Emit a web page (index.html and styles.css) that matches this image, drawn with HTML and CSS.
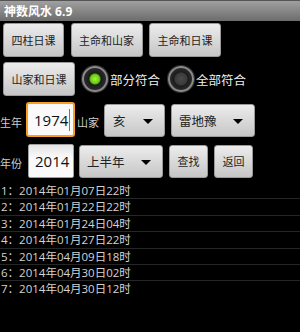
FILE: index.html
```html
<!DOCTYPE html>
<html lang="zh">

<head>
    <meta charset="UTF-8" />
    <meta name="viewport" content="width=device-width, initial-scale=1.0" />
    <title>神数风水 6.9</title>
    <link rel="stylesheet" href="styles.css">
</head>

<body>

    <header class="titlebar">神数风水 6.9</header>

    <nav class="row row-tabs">
        <button class="btn">四柱日课</button>
        <button class="btn">主命和山家</button>
        <button class="btn">主命和日课</button>
    </nav>

    <div class="row row-mode">
        <button class="btn">山家和日课</button>
        <label class="radio">
            <span class="radio-dot checked"></span>
            <span class="radio-text">部分符合</span>
        </label>
        <label class="radio">
            <span class="radio-dot"></span>
            <span class="radio-text">全部符合</span>
        </label>
    </div>

    <div class="row row-birth">
        <span class="field-label">生年</span>
        <div class="edit focused">1974<span class="caret"></span></div>
        <span class="field-label label-shan">山家</span>
        <div class="spinner spinner-small">亥<span class="arrow"></span></div>
        <div class="spinner spinner-wide">雷地豫<span class="arrow"></span></div>
    </div>

    <div class="row row-year">
        <span class="field-label">年份</span>
        <div class="edit">2014</div>
        <div class="spinner spinner-wide">上半年<span class="arrow"></span></div>
        <button class="btn btn-small">查找</button>
        <button class="btn btn-small">返回</button>
    </div>

    <ul class="results">
        <li>1：2014年01月07日22时</li>
        <li>2：2014年01月22日22时</li>
        <li>3：2014年01月24日04时</li>
        <li>4：2014年01月27日22时</li>
        <li>5：2014年04月09日18时</li>
        <li>6：2014年04月30日02时</li>
        <li>7：2014年04月30日12时</li>
    </ul>

</body>

</html>
```

FILE: styles.css
```css
* {
    box-sizing: border-box;
    margin: 0;
    padding: 0;
}

body {
    width: 300px;
    height: 332px;
    overflow: hidden;
    background: #000;
    color: #ddd;
    font-family: "Open Sans", "Noto Sans CJK SC", sans-serif;
}

.titlebar {
    height: 21px;
    line-height: 21px;
    padding-left: 4px;
    background: linear-gradient(#a0a0a0, #6c6c6c);
    border-top: 1px solid #555;
    color: #fff;
    font-size: 12px;
    font-weight: bold;
}

.row {
    display: flex;
    align-items: center;
}

.btn {
    height: 34px;
    padding: 0 7.5px;
    border: 1px solid #9a9a9a;
    border-radius: 3px;
    background: linear-gradient(#ececec, #c6c6c6);
    color: #1e1e1e;
    font-family: inherit;
    font-size: 11px;
    white-space: nowrap;
}

.btn-small {
    height: 33px;
    margin-left: 6px;
}

.row-tabs {
    margin-top: 2px;
    padding-left: 3px;
    gap: 6.5px;
}

.row-mode {
    margin-top: 5px;
    padding-left: 3px;
}

.radio {
    display: flex;
    align-items: center;
    gap: 2px;
    margin-left: 7px;
    color: #eee;
    font-size: 12.5px;
}

.radio + .radio {
    margin-left: 8px;
}

.radio-dot {
    width: 26px;
    height: 26px;
    border-radius: 50%;
    border: 2px solid #8a8a8a;
    background: radial-gradient(circle, #4a4a4a 0, #3a3a3a 6px, #1c1c1c 7px, #2a2a2a 11px);
    box-shadow: 0 0 0 1px #333;
}

.radio-dot.checked {
    background: radial-gradient(circle, #a8f040 0, #6dd312 4px, #58b010 5px, #1c1c1c 6px, #2a2a2a 11px);
}

.field-label {
    width: 22px;
    color: #ccc;
    font-size: 11px;
    white-space: nowrap;
    margin-top: 4px;
}

.label-shan {
    margin-left: 2px;
}

.edit {
    display: flex;
    align-items: center;
    height: 34px;
    margin-left: 6px;
    padding-left: 6px;
    width: 46px;
    border: 1px solid #a0a0a0;
    border-radius: 2px;
    background: linear-gradient(#e4e4e4, #fafafa 40%);
    color: #111;
    font-size: 15px;
}

.edit.focused {
    height: 35px;
    width: 49px;
    margin-left: 4px;
    padding-left: 6px;
    border: 2px solid #f5a020;
    border-radius: 3px;
    background: #fafafa;
}

.caret {
    width: 1px;
    height: 22px;
    margin-left: 1px;
    background: #777;
}

.spinner {
    position: relative;
    display: flex;
    align-items: center;
    height: 33px;
    margin-top: 2px;
    margin-left: 5px;
    padding-left: 7px;
    border: 1px solid #9a9a9a;
    border-radius: 3px;
    background: linear-gradient(#ececec, #c6c6c6);
    color: #222;
    font-size: 12.5px;
}

.spinner-small {
    width: 61px;
    padding-left: 8px;
}

.spinner-wide {
    width: 84px;
}

.spinner-wide + .spinner-wide,
.spinner-small + .spinner-wide {
    margin-left: 6px;
}

.arrow {
    position: absolute;
    right: 11px;
    top: 14px;
    border-left: 5px solid transparent;
    border-right: 5px solid transparent;
    border-top: 5px solid #000;
}

.row-birth {
    margin-top: 6px;
}

.row-year {
    margin-top: 7px;
}

.row-year .spinner {
    margin-top: 0;
}

.results {
    list-style: none;
    margin-top: 5px;
}

.results li {
    height: 16.4px;
    line-height: 15.4px;
    padding-left: 1px;
    border-bottom: 1px solid #262626;
    color: #d4d4d4;
    font-size: 11.5px;
    white-space: nowrap;
}

.results li:last-child {
    border-bottom: none;
}
```
